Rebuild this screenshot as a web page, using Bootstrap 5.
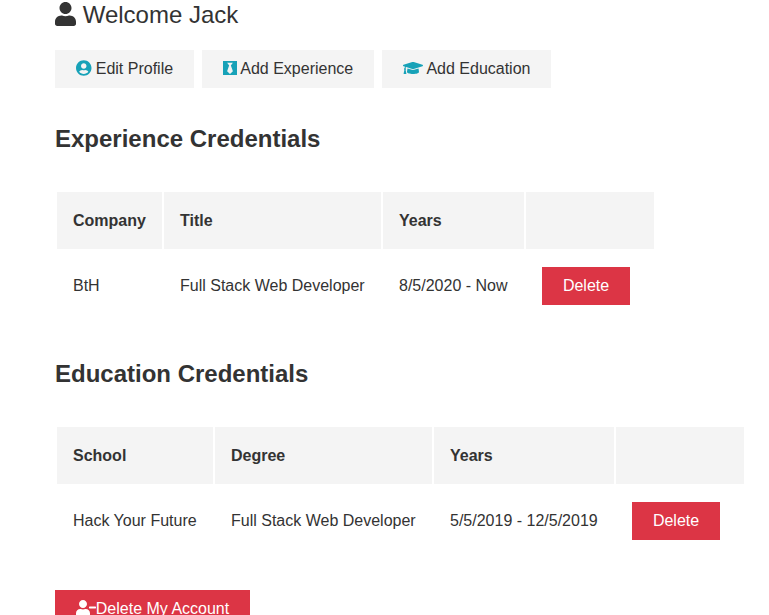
<!DOCTYPE html>
<html lang="en">
<head>
<meta charset="utf-8">
<meta name="viewport" content="width=device-width, initial-scale=1">
<title>Dashboard</title>
<link href="https://cdn.jsdelivr.net/npm/bootstrap@5.3.0/dist/css/bootstrap.min.css" rel="stylesheet">
<style>
  body { font-family: Arial, "Liberation Sans", sans-serif; font-size: 16px; line-height: 25px; color: #333; background: #fff; height: 615px; overflow: hidden; }
  .dashboard { padding-left: 55px; margin-top: -4px; }
  .welcome { font-size: 24px; line-height: 38px; }
  .section-title { font-size: 24px; line-height: 38px; font-weight: 700; margin: 32px 0; }
  .btn { --bs-btn-padding-x: 20.8px; --bs-btn-line-height: 25px; --bs-btn-border-width: 0; --bs-btn-border-radius: 0; padding-top: 6px; padding-bottom: 7px; height: 38px; white-space: nowrap; }
  .btn-light { --bs-btn-bg: #f4f4f4; --bs-btn-color: #333; }
  .btn-danger { --bs-btn-bg: #dc3545; }
  .credentials { border-collapse: separate; border-spacing: 2px; table-layout: fixed; }
  .experience { width: 601px; }
  .education { width: 691px; }
  .credentials th, .credentials td { padding: 16px; white-space: nowrap; }
  .credentials td:not(:last-child) { padding-bottom: 17px; }
  .credentials th { background: #f4f4f4; }
  .credentials .btn { display: block; width: 88px; }
  .w-company { width: 105px; }
  .w-school { width: 156px; }
  .w-role { width: 217px; }
  .w-years { width: 141px; }
  .w-range { width: 180px; }
  .w-action { width: 128px; }
  .fa { height: 1em; width: auto; fill: currentColor; vertical-align: -.125em; overflow: visible; }
  .accent { color: #17a2b8; }
</style>
</head>
<body>
<main class="dashboard">
  <p class="welcome mb-3"><svg class="fa" viewBox="0 0 448 512"><path d="M224 256c70.7 0 128-57.3 128-128S294.7 0 224 0 96 57.3 96 128s57.3 128 128 128zm89.6 32h-16.7c-22.2 10.2-46.9 16-72.9 16s-50.6-5.8-72.9-16h-16.7C60.2 288 0 348.2 0 422.4V464c0 26.5 21.5 48 48 48h352c26.5 0 48-21.5 48-48v-41.6c0-74.2-60.2-134.4-134.4-134.4z"/></svg> Welcome Jack</p>

  <div class="d-flex gap-2">
    <a class="btn btn-light" href="#"><svg class="fa accent" viewBox="0 0 496 512"><path d="M248 8C111 8 0 119 0 256s111 248 248 248 248-111 248-248S385 8 248 8zm0 96c48.6 0 88 39.4 88 88s-39.4 88-88 88-88-39.4-88-88 39.4-88 88-88zm0 344c-58.7 0-111.3-26.6-146.5-68.2 18.8-35.4 55.6-59.8 98.5-59.8 2.4 0 4.8.4 7.1 1.1 13 4.2 26.6 6.9 40.9 6.9 14.3 0 28-2.7 40.9-6.9 2.3-.7 4.7-1.1 7.1-1.1 42.9 0 79.7 24.4 98.5 59.8C359.3 421.4 306.7 448 248 448z"/></svg> Edit Profile</a>
    <a class="btn btn-light" href="#"><svg class="fa accent" viewBox="0 0 448 512"><path d="M0 32v448h448V32H0zm316.5 325.2L224 445.9l-92.5-88.7 64.5-184-64.5-86.6h184.9L252 173.2l64.5 184z"/></svg> Add Experience</a>
    <a class="btn btn-light" href="#"><svg class="fa accent" viewBox="0 0 640 512"><path d="M622.34 153.2L343.4 67.5c-15.2-4.67-31.6-4.67-46.79 0L17.66 153.2c-23.54 7.23-23.54 38.36 0 45.59l48.63 14.94c-10.67 13.19-17.23 29.28-17.88 46.9C38.78 266.15 32 276.11 32 288c0 10.78 5.68 19.85 13.86 25.65L20.33 428.53C18.11 438.52 25.71 448 35.94 448h56.11c10.24 0 17.84-9.48 15.62-19.47L82.14 313.65C90.32 307.85 96 298.78 96 288c0-11.57-6.47-21.25-15.66-26.87.76-15.02 8.44-28.3 20.69-36.72L296.6 284.5c9.06 2.78 26.44 6.25 46.79 0l278.95-85.7c23.55-7.24 23.55-38.36 0-45.6zM352.79 315.09c-28.53 8.76-52.84 3.92-65.59 0l-145.02-44.55L128 384c0 35.35 85.96 64 192 64s192-28.65 192-64l-14.18-113.47-145.03 44.56z"/></svg> Add Education</a>
  </div>

  <h2 class="section-title">Experience Credentials</h2>
  <table class="credentials experience">
    <thead><tr><th class="w-company">Company</th><th class="w-role">Title</th><th class="w-years">Years</th><th class="w-action"></th></tr></thead>
    <tbody><tr><td>BtH</td><td>Full Stack Web Developer</td><td>8/5/2020 - Now</td><td><button class="btn btn-danger">Delete</button></td></tr></tbody>
  </table>

  <h2 class="section-title">Education Credentials</h2>
  <table class="credentials education">
    <thead><tr><th class="w-school">School</th><th class="w-role">Degree</th><th class="w-range">Years</th><th class="w-action"></th></tr></thead>
    <tbody><tr><td>Hack Your Future</td><td>Full Stack Web Developer</td><td>5/5/2019 - 12/5/2019</td><td><button class="btn btn-danger">Delete</button></td></tr></tbody>
  </table>

  <div class="pt-2"><button class="btn btn-danger mt-4"><svg class="fa" viewBox="0 0 640 512"><path d="M624 208H432c-8.8 0-16 7.2-16 16v32c0 8.8 7.2 16 16 16h192c8.8 0 16-7.2 16-16v-32c0-8.8-7.2-16-16-16zm-400 48c70.7 0 128-57.3 128-128S294.7 0 224 0 96 57.3 96 128s57.3 128 128 128zm89.6 32h-16.7c-22.2 10.2-46.9 16-72.9 16s-50.6-5.8-72.9-16h-16.7C60.2 288 0 348.2 0 422.4V464c0 26.5 21.5 48 48 48h352c26.5 0 48-21.5 48-48v-41.6c0-74.2-60.2-134.4-134.4-134.4z"/></svg>Delete My Account</button></div>
</main>
<script src="https://cdn.jsdelivr.net/npm/bootstrap@5.3.0/dist/js/bootstrap.bundle.min.js"></script>
</body>
</html>
